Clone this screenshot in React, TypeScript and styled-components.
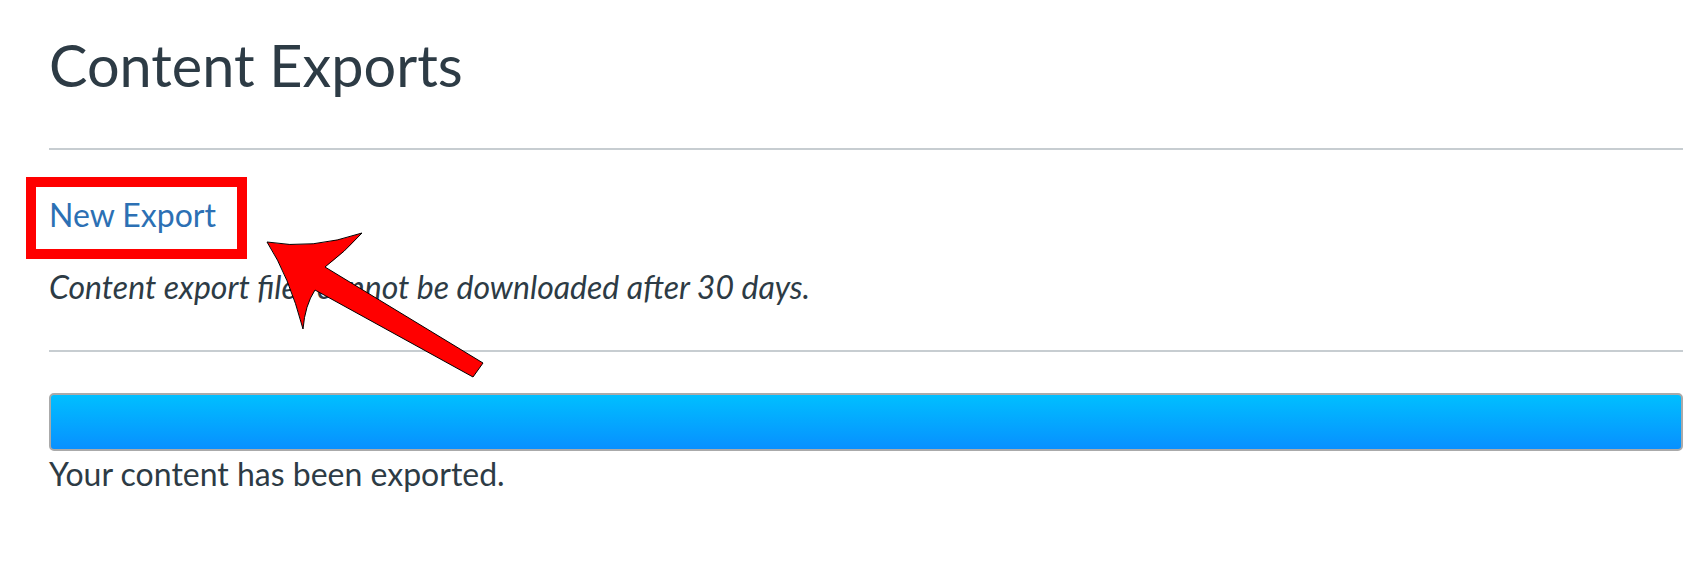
import { Fragment } from "react";
import styled, { createGlobalStyle } from "styled-components";

const GlobalStyle = createGlobalStyle`
  html, body {
    margin: 0;
    padding: 0;
    background: #fff;
  }
  body {
    font-family: Lato, "Open Sans", "Liberation Sans", sans-serif;
    color: #2d3b45;
  }
`;

const Page = styled.main`
  position: relative;
  padding: 30px 23px 60px 49px;
`;

const Title = styled.h1`
  margin: 0;
  font-size: 57.6px;
  font-weight: 400;
  line-height: 1.2;
`;

const Rule = styled.hr<{ $top: number }>`
  margin: ${(p) => p.$top}px 0 0;
  border: 0;
  height: 2px;
  background: #c7cdd1;
`;

const LinkRow = styled.div`
  margin-top: 41px;
  font-size: 32px;
  line-height: 48px;
`;

const Highlight = styled.span`
  position: relative;
  display: inline-block;

  &::after {
    content: "";
    position: absolute;
    top: -14px;
    left: -23px;
    right: -31px;
    bottom: -20px;
    border: 10px solid #ff0000;
    pointer-events: none;
  }
`;

const Link = styled.a`
  color: #2c70b4;
  text-decoration: none;
`;

const Note = styled.p`
  margin: 24px 0 0;
  font-size: 32px;
  line-height: 48px;
  font-style: italic;
`;

const Progress = styled.div`
  margin-top: 41px;
  height: 54px;
  border: 2px solid #aaaaaa;
  border-radius: 5px;
  background: linear-gradient(to bottom, #00bfff, #0890ff);
`;

const Status = styled.p`
  margin: 4px 0 0;
  font-size: 32px;
  line-height: 1.2;
`;

const Arrow = styled.svg`
  position: absolute;
  left: 0;
  top: 0;
  width: 520px;
  height: 400px;
  pointer-events: none;
`;

export default function App() {
  return (
    <Fragment>
      <GlobalStyle />
      <Page>
        <Title>Content Exports</Title>
        <Rule $top={49} />
        <LinkRow>
          <Highlight>
            <Link href="#">New Export</Link>
          </Highlight>
        </LinkRow>
        <Note>Content export files cannot be downloaded after 30 days.</Note>
        <Rule $top={39} />
        <Progress />
        <Status>Your content has been exported.</Status>
        <Arrow viewBox="0 0 520 400">
          <path
            d="M267,242 Q312,250 362,233 Q345,252 325,267 L483,363 L473,377 L315,290 Q305,305 303,329 Q289,276 267,242 Z"
            fill="#ff0000"
            stroke="#000"
            strokeWidth="1"
            strokeLinejoin="miter"
          />
        </Arrow>
      </Page>
    </Fragment>
  );
}
